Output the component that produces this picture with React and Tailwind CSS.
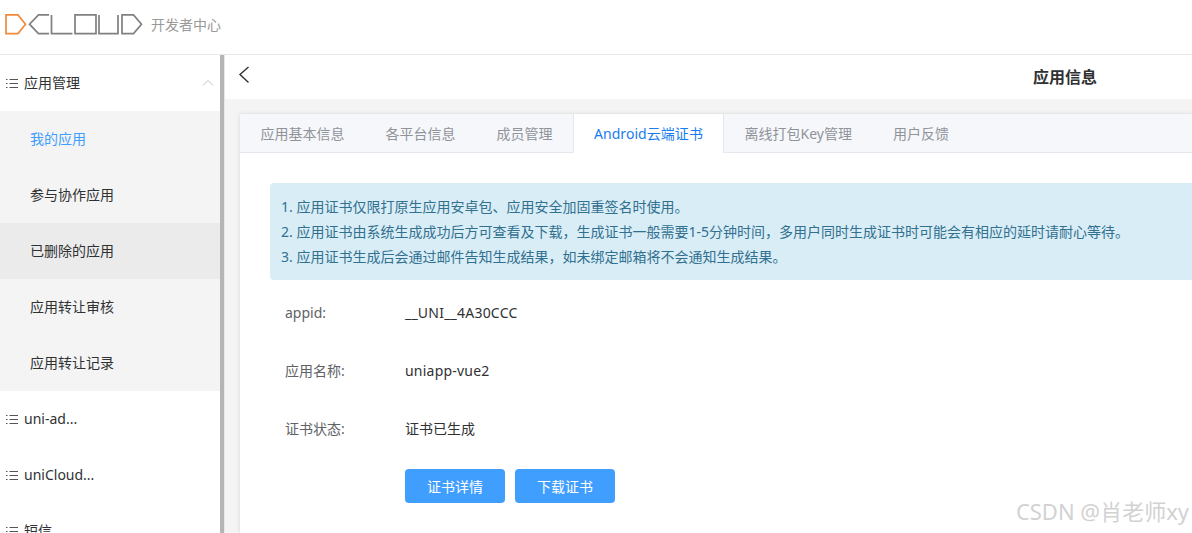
import React from "react";

const FONT = "font-['Noto_Sans','Noto_Sans_CJK_SC',sans-serif]";

function Logo() {
  return (
    <svg width="146" height="24" viewBox="0 0 146 24" fill="none" strokeWidth="1.7" className="shrink-0 mb-[3px]">
      <path d="M6 .9H18L25.5 10.2L18 19.6H6Z" stroke="#f08a3c" />
      <g stroke="#808080">
        <path d="M49 .9H38.5L29.5 10.2L38.5 19.6H49" />
        <path d="M51.5 .9V19.6H72.5" />
        <path d="M75 .9H96V19.6H75Z" />
        <path d="M99 .9V19.6H118V.9" />
        <path d="M122 .9H133.5L141.5 10.2L133.5 19.6H122Z" />
      </g>
    </svg>
  );
}

function ListIcon() {
  return (
    <svg width="14" height="14" viewBox="0 0 14 14" fill="none" className="shrink-0">
      <g stroke="#555" strokeWidth="1">
        <path d="M1 3.5H2.5M1 7.5H2.5M1 11.5H2.5" />
        <path d="M4.5 3.5H13M4.5 7.5H13M4.5 11.5H13" />
      </g>
    </svg>
  );
}

function MenuHead({ label, open }) {
  return (
    <div className="h-14 flex items-center pl-[5px] pr-[6px] text-[14px] text-[#303133] shrink-0">
      <ListIcon />
      <span className="ml-[5px] flex-1 mb-[2px]">{label}</span>
      {open && (
        <svg width="12" height="8" viewBox="0 0 12 8" fill="none" stroke="#c0c4cc" strokeWidth="1">
          <path d="M1 6.5L6 1.5L11 6.5" />
        </svg>
      )}
    </div>
  );
}

function SubItem({ label, active, hover }) {
  return (
    <div
      className={`h-14 flex items-center pl-[30px] pb-[2px] text-[14px] ${
        active ? "text-[#409eff]" : "text-[#303133]"
      } ${hover ? "bg-[#ebebeb]" : "bg-[#f4f4f4]"}`}
    >
      {label}
    </div>
  );
}

function Tab({ label, active }) {
  return active ? (
    <div className="h-[39px] w-[151px] flex items-center justify-center bg-white border-x border-[#e4e7ed] text-[14px] tracking-[0.05px] text-[#1a7cf0]">
      {label}
    </div>
  ) : (
    <div className="h-[38px] flex items-center px-[20.5px] text-[14px] text-[#909399]">{label}</div>
  );
}

function Row({ label, value, latin }) {
  return (
    <div className="flex items-center h-[58px] pl-[15px] pb-[4px]">
      <div className="w-[120px] text-[14px] text-[#606266]">{label}</div>
      <div className={`text-[14px] text-[#303133] ${latin ? "tracking-[0.22px]" : ""}`}>{value}</div>
    </div>
  );
}

function Btn({ label }) {
  return (
    <div className="w-[100px] h-[34px] rounded-[4px] bg-[#409eff] text-white text-[14px] flex items-center justify-center">
      {label}
    </div>
  );
}

export default function App() {
  return (
    <div className={`relative w-[1192px] h-[533px] overflow-hidden bg-white flex flex-col ${FONT}`}>
      <header className="h-[55px] shrink-0 border-b border-[#e8e8e8] flex items-center">
        <Logo />
        <span className="ml-[5px] mb-[6px] text-[14px] text-[#999]">开发者中心</span>
      </header>
      <div className="flex flex-1 min-h-0">
        <aside className="w-[225px] shrink-0 flex border-r border-[#e8e8e8] overflow-hidden">
          <div className="w-[220px] shrink-0">
            <MenuHead label="应用管理" open />
            <SubItem label="我的应用" active />
            <SubItem label="参与协作应用" />
            <SubItem label="已删除的应用" hover />
            <SubItem label="应用转让审核" />
            <SubItem label="应用转让记录" />
            <MenuHead label="uni-ad..." />
            <MenuHead label="uniCloud..." />
            <MenuHead label="短信" />
          </div>
          <div className="w-1 bg-[#b5b5b5]" />
        </aside>
        <main className="flex-1 min-w-0 bg-[#f4f4f4] flex flex-col">
          <div className="h-11 shrink-0 bg-white flex items-center">
            <svg width="12" height="18" viewBox="0 0 12 18" fill="none" stroke="#303133" strokeWidth="1.4" className="ml-[13px] mb-[4px]">
              <path d="M10.5 1L2 8.5L10.5 16.5" />
            </svg>
            <span className="ml-[783px] mb-[1px] text-[16px] font-bold text-[#303133]">应用信息</span>
          </div>
          <div className="pt-[15px] pl-[15px] flex-1 min-h-0">
            <div className="bg-white h-full shadow-[0_0_4px_rgba(0,0,0,0.12)]">
              <div className="h-[39px] bg-[#f5f7fa] border-b border-[#e4e7ed] flex">
                <Tab label="应用基本信息" />
                <Tab label="各平台信息" />
                <Tab label="成员管理" />
                <Tab label="Android云端证书" active />
                <Tab label="离线打包Key管理" />
                <Tab label="用户反馈" />
              </div>
              <div className="pt-[30px] pl-[30px]">
                <div className="h-[97px] rounded-l-[4px] bg-[#d9edf6] text-[#31708f] text-[14px] leading-[25px] pl-[11px] pt-[11px] whitespace-nowrap">
                  <p>1. 应用证书仅限打原生应用安卓包、应用安全加固重签名时使用。</p>
                  <p>2. 应用证书由系统生成成功后方可查看及下载，生成证书一般需要1-5分钟时间，多用户同时生成证书时可能会有相应的延时请耐心等待。</p>
                  <p>3. 应用证书生成后会通过邮件告知生成结果，如未绑定邮箱将不会通知生成结果。</p>
                </div>
                <div className="pt-[5px]">
                  <Row label="appid:" value="__UNI__4A30CCC" latin />
                  <Row label="应用名称:" value="uniapp-vue2" latin />
                  <Row label="证书状态:" value="证书已生成" />
                </div>
                <div className="flex gap-[10px] pl-[135px] pt-[10px]">
                  <Btn label="证书详情" />
                  <Btn label="下载证书" />
                </div>
              </div>
            </div>
          </div>
        </main>
      </div>
      <div className="absolute right-[3px] bottom-[8px] text-[22px] leading-7 text-[#d2d2d2]">CSDN @肖老师xy</div>
    </div>
  );
}
